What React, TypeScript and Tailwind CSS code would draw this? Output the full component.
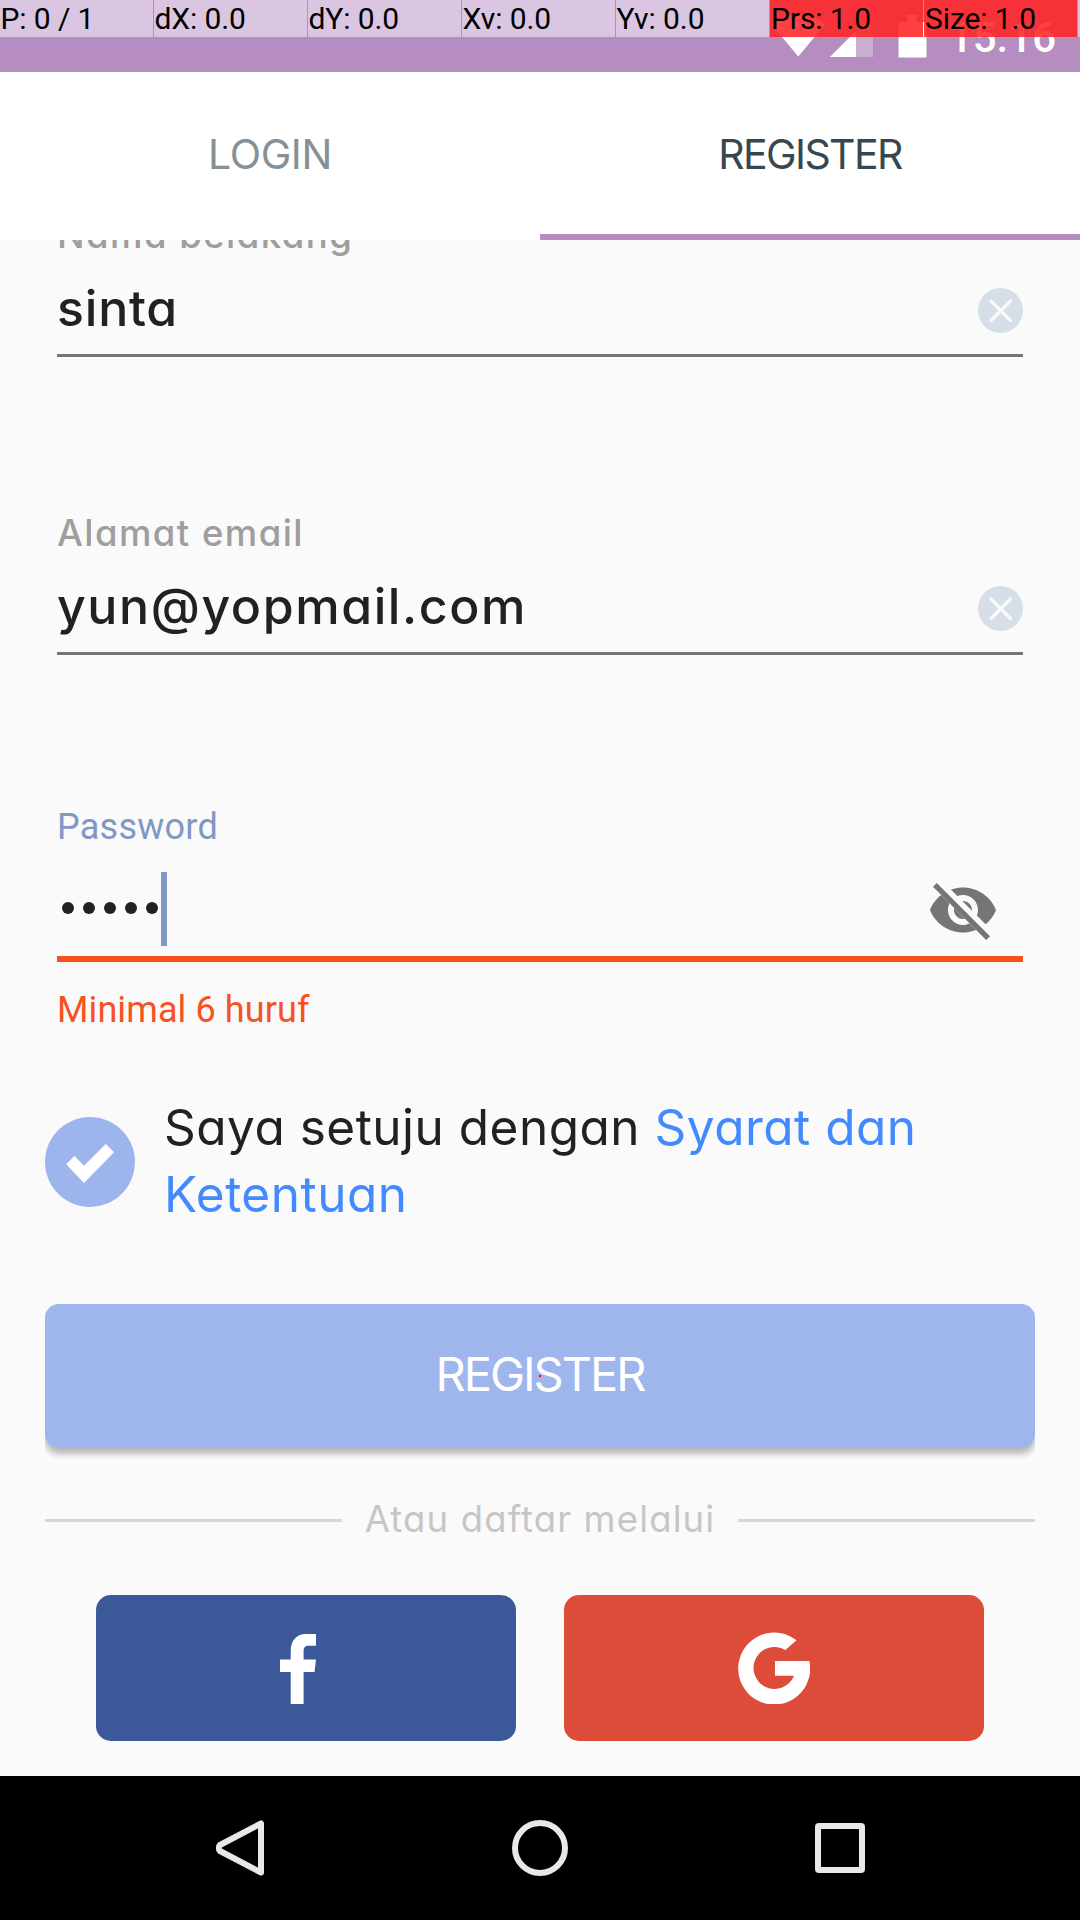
import type { ReactNode } from "react";

const geo = "font-['Inter',sans-serif] [font-feature-settings:'cv11']";

function PointerBar() {
  const cells = ["P: 0 / 1", "dX: 0.0", "dY: 0.0", "Xv: 0.0", "Yv: 0.0", "Prs: 1.0", "Size: 1.0"];
  return (
    <div className="absolute inset-x-0 top-0 flex h-[37px] gap-px font-['Roboto',sans-serif] text-[30px] leading-[37px] tracking-[-0.1px] text-black">
      {cells.map((c, i) => (
        <div key={c} className="w-[153px] shrink-0 bg-white/50 whitespace-pre">
          <div className={i > 4 ? "bg-[#ff0000]/75 pl-px" : "pl-[0.5px]"}>{c}</div>
        </div>
      ))}
      <div className="flex-1 bg-white/50" />
    </div>
  );
}

function StatusBar() {
  return (
    <div className="relative flex h-[72px] items-center justify-end bg-[#b58dc1] pr-[24px]">
      <svg width="54" height="44" viewBox="0 0 54 44" fill="#fff">
        <path d="M27.3 42.5L.5 10.5C9 3.500 18 1 27.300 1S45.600 3.500 54 10.500z" />
      </svg>
      <svg className="ml-[5px]" width="43" height="44" viewBox="0 0 43 44">
        <path d="M0 43L43 0v43z" fill="#fff" fillOpacity=".3" />
        <path d="M0 43L26 17v26z" fill="#fff" />
      </svg>
      <svg className="ml-[25px]" width="29" height="44" viewBox="0 0 29 44" fill="#fff">
        <path d="M9 1h10v7h9.500v35.500H.5V8H9z" />
      </svg>
      <div className="ml-[22px] pt-[3px] font-['Roboto',sans-serif] text-[42px] leading-[48px] font-medium text-white">15.16</div>
      <PointerBar />
    </div>
  );
}

function Tabs() {
  return (
    <div className={`relative z-10 grid h-[168px] grid-cols-2 bg-white text-[41px] ${geo}`}>
      <div className="flex items-center justify-center border-b-[6px] border-transparent pt-[4px] tracking-[-0.4px] text-[#869095]">LOGIN</div>
      <div className="flex items-center justify-center border-b-[6px] border-[#b58dc1] pt-[4px] tracking-[-1.6px] text-[#37474f]">REGISTER</div>
    </div>
  );
}

function ClearIcon() {
  return (
    <svg className="mt-[10px]" width="45" height="45" viewBox="0 0 45 45">
      <circle cx="22.500" cy="22.500" r="22.500" fill="#d6dee7" />
      <path d="M13 13l19.500 19.500M32.500 13l-19.500 19.500" stroke="#fafafa" strokeWidth="3.200" strokeLinecap="round" />
    </svg>
  );
}

function Field({ label, children }: { label: string; children: ReactNode }) {
  return (
    <div className={`mx-[12px] border-b-[3px] border-[#757575] pb-[16px] font-medium ${geo}`}>
      <div className="h-[44px] text-[36.5px] leading-[44px] tracking-[1.45px] text-[#9e9e9e]">{label}</div>
      <div className="mt-[21px] flex h-[60px] items-start justify-between text-[50px] leading-[61px] text-[#212121]">
        {children}
        <ClearIcon />
      </div>
    </div>
  );
}

function EyeOff() {
  return (
    <svg className="mt-[2px] mr-[24px]" width="72" height="72" viewBox="0 0 24 24" fill="#757575">
      <defs>
        <clipPath id="strike">
          <path d="M2 4.270L19.730 22 22.270 19.460 4.540 1.730V1H23v22H1V4.270z" />
        </clipPath>
      </defs>
      <path
        clipPath="url(#strike)"
        d="M12 4.500C7 4.500 2.730 7.610 1 12c1.730 4.390 6 7.500 11 7.500s9.270-3.110 11-7.500c-1.730-4.390-6-7.500-11-7.500zM12 17c-2.760 0-5-2.240-5-5s2.240-5 5-5 5 2.240 5 5-2.240 5-5 5zm0-8c-1.660 0-3 1.340-3 3s1.340 3 3 3 3-1.340 3-3-1.340-3-3-3z"
      />
      <path d="M3.270 4.270L19.740 20.740" fill="none" stroke="#757575" strokeWidth="1.800" strokeLinecap="square" />
    </svg>
  );
}

function PasswordField() {
  return (
    <div className="mx-[12px] mt-[150px] font-['Roboto',sans-serif] text-[36px] leading-[44px]">
      <div className="tracking-[0.25px] text-[#8197c5]">Password</div>
      <div className="mt-[23px] flex h-[74px] items-center pl-[4.5px]">
        <div className="flex gap-[8.500px] pb-[2px]">
          {[0, 1, 2, 3, 4].map((n) => (
            <span key={n} className="size-[12.500px] rounded-full bg-[#212121]" />
          ))}
        </div>
        <div className="ml-[3px] h-[74px] w-[6px] bg-[#8197c5]" />
        <div className="ml-auto">
          <EyeOff />
        </div>
      </div>
      <div className="mt-[10px] h-[6px] bg-[#f7511f]" />
      <div className="mt-[26px] tracking-[0.1px] text-[#f7511f]">Minimal 6 huruf</div>
    </div>
  );
}

export default function App() {
  return (
    <div className="flex h-[1920px] w-[1080px] flex-col overflow-hidden bg-[#fafafa]">
      <StatusBar />
      <Tabs />
      <main className="flex-1 overflow-hidden px-[45px]">
        <div className="-mt-[27px]">
          <Field label="Nama belakang">
            <span className="tracking-[0.8px]">sinta</span>
          </Field>
        </div>
        <div className="mt-[154px]">
          <Field label="Alamat email">
            <span className="tracking-[1.6px]">yun@yopmail.com</span>
          </Field>
        </div>
        <PasswordField />

        <div className={`mt-[62px] flex text-[49.5px] leading-[67px] text-[#212121] ${geo}`}>
          <svg className="mt-[23px] shrink-0" width="90" height="90" viewBox="0 0 90 90">
            <circle cx="45" cy="45" r="45" fill="#9db5ec" />
            <path d="M21.200 47.300L29.400 39 39 48.700 60.800 27 69 35.300 39 66z" fill="#fff" />
          </svg>
          <p className="ml-[29px] flex-1 tracking-[0.5px]">
            Saya setuju dengan <span className="text-[#448aff]">Syarat dan<br />Ketentuan</span>
          </p>
        </div>

        <div className="mt-[76px] [clip-path:inset(-20px_0)]">
          <button className={`relative block h-[144px] w-full rounded-[14px] bg-[#9fb6ed] pb-[4px] text-[47px] tracking-[-2px] text-white shadow-[0_6px_6px_rgba(0,0,0,0.27)] ${geo}`}>
            REGISTER
            <span className="absolute top-[71px] left-[494px] size-[2px] bg-[#ff0000]" />
          </button>
        </div>

        <div className={`mt-[49px] flex h-[44px] items-center text-[36.5px] leading-[44px] text-[#c6c6c6] ${geo}`}>
          <div className="mt-[3px] h-[3px] w-[297px] bg-[#d6d8d8]" />
          <div className="flex-1 text-center tracking-[1.15px] whitespace-nowrap">Atau daftar melalui</div>
          <div className="mt-[3px] h-[3px] w-[297px] bg-[#d6d8d8]" />
        </div>

        <div className="mt-[54px] flex justify-between px-[51px]">
          <div className="h-[146px] w-[420px] rounded-[15px] bg-[#3b5998]">
            <svg className="mt-[39px] ml-[184px]" width="37" height="70" viewBox="0 0 37 70" fill="#fff">
              <path d="M10.700 70V38H0V25.500H10.700V17C10.700 6 17 0 26 0H36V11.800H29C25 11.800 23.600 13.500 23.600 17.500V25.500H36L34.500 38H23.600V70z" />
            </svg>
          </div>
          <div className="h-[146px] w-[420px] rounded-[15px] bg-[#dd4b39]">
            <svg className="mt-[37px] ml-[174px]" width="72" height="72" viewBox="0 0 72 72" fill="#fff">
              <path d="M58.500 8.300A36 36 0 1 0 71.400 29H37V43.700H56A21 21 0 1 1 47.400 18z" />
            </svg>
          </div>
        </div>
      </main>

      <nav className="flex h-[144px] shrink-0 items-center bg-black pl-[216px]">
        <svg width="48" height="56" viewBox="0 0 48 56" fill="none" stroke="#e8e8e8" strokeWidth="6" strokeLinejoin="round">
          <path d="M45 3.500V52.500L4 31Q1.500 28 4 25z" />
        </svg>
        <div className="ml-[248px] size-[56px] rounded-full border-[6px] border-[#e8e8e8]" />
        <div className="ml-[247px] size-[50px] rounded-[4px] border-[6px] border-[#e8e8e8]" />
      </nav>
    </div>
  );
}
